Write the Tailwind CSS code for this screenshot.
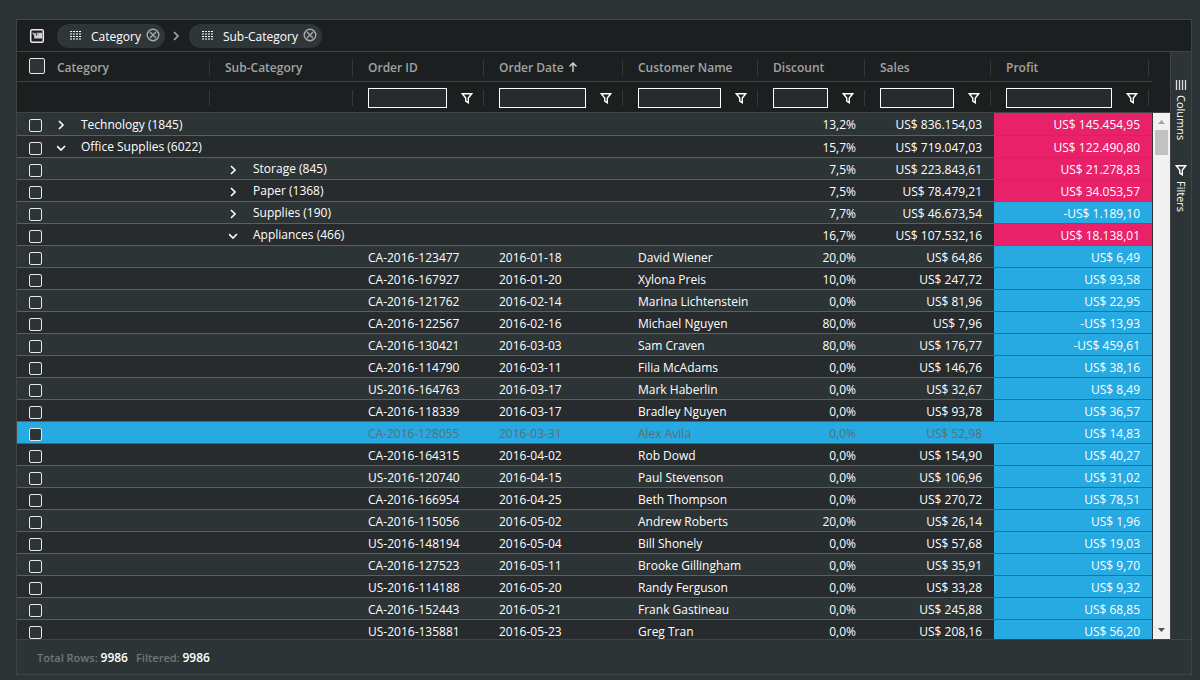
<!DOCTYPE html>
<html lang="en">
<head>
<meta charset="utf-8">
<title>Orders grid</title>
<script src="https://cdn.jsdelivr.net/npm/@tailwindcss/browser@4"></script>
</head>
<body class="h-screen overflow-hidden bg-[#2d3436] p-4 pt-[19px] pr-2 pb-[5px] text-xs text-white font-['Segoe_UI','Open_Sans','Noto_Sans',sans-serif]">
<svg class="hidden" aria-hidden="true">
  <symbol id="filter" viewBox="0 0 12 12"><path d="M1.300 1.700h9.400L7.300 6v4.700L4.700 9V6z" fill="none" stroke="currentColor" stroke-width="1.4"/></symbol>
  <symbol id="right" viewBox="0 0 10 10"><path d="M2 1l4 4-4 4" fill="none" stroke="currentColor" stroke-width="1.6"/></symbol>
  <symbol id="down" viewBox="0 0 10 10"><path d="M0 3l4 4 4-4" fill="none" stroke="currentColor" stroke-width="1.6"/></symbol>
  <symbol id="grip" viewBox="0 0 12 9"><path d="M1 .5h2m1 0h2m1 0h2m1 0h2M1 3h2m1 0h2m1 0h2m1 0h2M1 5.5h2m1 0h2m1 0h2m1 0h2M1 8h2m1 0h2m1 0h2m1 0h2" fill="none" stroke="currentColor" stroke-width="1.2"/></symbol>
  <symbol id="close" viewBox="0 0 14 14"><g fill="none" stroke="currentColor" stroke-width="1.4"><circle cx="7" cy="7" r="5.8"/><path d="M4 4l6 6M10 4l-6 6"/></g></symbol>
</svg>
<main class="flex h-full flex-col border border-[#434343]">
  <nav class="flex h-8 shrink-0 items-center border-b border-[#434343] bg-[#1c1f20] pl-3" aria-label="Row groups">
    <svg class="size-4" viewBox="0 0 16 16"><rect x="1.700" y="1.700" width="12.600" height="12.600" rx="1.500" fill="none" stroke="#f0e8f4" stroke-width="1.500"/><path d="M3 4.800h2.200l.8 1.400.8-1.400H13.200v5.700H5.200V7.500z" fill="#d6cfda"/><path d="M7.500 5v3M9 5.500v1" stroke="#1c1f20" stroke-width=".7"/></svg>
    <div class="ml-3 flex h-6 items-center rounded-full bg-[#2f363a] pl-3 pr-[5px]">
      <svg class="h-[9px] w-3"><use href="#grip"/></svg><span class="ml-[10px] pt-[2px]">Category</span>
      <button class="ml-[5px] pb-[2px] text-[#aaa]" aria-label="Remove Category"><svg class="size-[14px]"><use href="#close"/></svg></button>
    </div>
    <svg class="mx-[7px] size-[10px] text-[#aaa]"><use href="#right"/></svg>
    <div class="flex h-6 items-center rounded-full bg-[#2f363a] pl-3 pr-[5px]">
      <svg class="h-[9px] w-3"><use href="#grip"/></svg><span class="ml-[10px] pt-[2px]">Sub-Category</span>
      <button class="ml-[5px] pb-[2px] text-[#aaa]" aria-label="Remove Sub-Category"><svg class="size-[14px]"><use href="#close"/></svg></button>
    </div>
  </nav>
  <div class="flex min-h-0 flex-1">
    <div class="min-w-0 flex-1 overflow-hidden">
      <table class="w-full table-fixed border-separate border-spacing-0">
        <colgroup><col class="w-[28px]"><col class="w-[168px]"><col class="w-[143px]"><col class="w-[131px]"><col class="w-[139px]"><col class="w-[135px]"><col class="w-[107px]"><col class="w-[126px]"><col></colgroup>
        <thead class="bg-[#1c1f20] text-left text-[#a3a3a3]"><tr id="titles"></tr><tr id="filters"></tr></thead>
        <tbody id="rows"></tbody>
      </table>
    </div>
    <div class="flex w-[18px] shrink-0 flex-col">
      <div class="h-[61px] shrink-0 border-b border-[#434343] bg-[#1c1f20]"></div>
      <div class="ml-px flex flex-1 flex-col items-center justify-between bg-[#f1f1f1] py-[7px]">
        <div class="flex flex-col items-center gap-[6px]">
          <svg class="h-1 w-[7px]" viewBox="0 0 7 4"><path d="M0 4l3.500-4L7 4z" fill="#a3a3a3"/></svg>
          <div class="h-[25px] w-[13px] bg-[#c1c1c1]"></div>
        </div>
        <svg class="h-1 w-[7px]" viewBox="0 0 7 4"><path d="M0 0l3.500 4L7 0z" fill="#505050"/></svg>
      </div>
    </div>
    <aside class="flex w-[21px] shrink-0 flex-col items-center border-l border-[#434343] pt-7 text-[11px]">
      <button class="flex items-center gap-[5px] [writing-mode:vertical-rl]"><svg class="h-[10px] w-3" viewBox="0 0 12 10"><path d="M1.500 0v10M4.500 0v10M7.500 0v10M10.500 0v10" stroke="#ddd" stroke-width="1.300"/></svg>Columns</button>
      <button class="mt-6 flex items-center gap-[5px] [writing-mode:vertical-rl]"><svg class="size-3"><use href="#filter"/></svg>Filters</button>
    </aside>
  </div>
  <footer class="flex h-[35px] shrink-0 items-center border-t border-[#434343] pl-5 pt-[2px] text-[11px] font-semibold text-[#72787a]">
    <span>Total Rows: <b class="text-xs font-semibold text-white">9986</b></span><span class="ml-2">Filtered: <b class="text-xs font-semibold text-white">9986</b></span>
  </footer>
</main>
<script>
const box = (label, size) => `<input type="checkbox" aria-label="${label}" class="block appearance-none border-[#e8e8e8] bg-[#2d3436] ${size}">`;
const sep = '<span class="absolute right-[3px] top-2 h-4 w-px bg-[#343839]"></span>';
const names = ['Category','Sub-Category','Order ID','Order Date','Customer Name','Discount','Sales','Profit'];
const arrow = '<svg class="ml-1 inline size-[10px] align-baseline" viewBox="0 0 10 10"><path d="M5 10V1M1.500 4.500L5 1l3.500 3.500" fill="none" stroke="#ccc" stroke-width="1.500"/></svg>';
document.getElementById('titles').innerHTML =
  `<th class="h-[30px] border-b border-[#434343] p-0 pl-3 align-top"><div class="pt-[6px]">${box('Select all','size-4 rounded-[2px] border')}</div></th>` +
  names.map(n => `<th class="relative h-[30px] whitespace-nowrap border-b border-[#434343] px-3 pt-[3px] pb-0 font-semibold">${n}${n === 'Order Date' ? arrow : ''}${sep}</th>`).join('');
document.getElementById('filters').innerHTML =
  '<td class="h-[31px] border-b border-[#434343] p-0"></td>' +
  names.map((n, i) => `<td class="relative h-[31px] border-b border-[#434343] px-3 pt-[2px] pb-0">${i > 1 ? `<div class="flex items-center gap-[14px] pr-[2px]"><input aria-label="Filter ${n}" class="h-5 w-0 min-w-0 flex-1 border border-white bg-[#272b2e] px-1"><button aria-label="${n} filter menu" class="text-white"><svg class="size-3"><use href="#filter"/></svg></button></div>` : ''}${sep}</td>`).join('');
const data = [
 ['g','Technology (1845)',0,'13,2%','836.154,03','145.454,95'],
 ['g','Office Supplies (6022)',1,'15,7%','719.047,03','122.490,80'],
 ['s','Storage (845)',0,'7,5%','223.843,61','21.278,83'],
 ['s','Paper (1368)',0,'7,5%','78.479,21','34.053,57'],
 ['s','Supplies (190)',0,'7,7%','46.673,54','-1.189,10'],
 ['s','Appliances (466)',1,'16,7%','107.532,16','18.138,01'],
 ['CA-2016-123477','2016-01-18','David Wiener','20,0%','64,86','6,49'],
 ['CA-2016-167927','2016-01-20','Xylona Preis','10,0%','247,72','93,58'],
 ['CA-2016-121762','2016-02-14','Marina Lichtenstein','0,0%','81,96','22,95'],
 ['CA-2016-122567','2016-02-16','Michael Nguyen','80,0%','7,96','-13,93'],
 ['CA-2016-130421','2016-03-03','Sam Craven','80,0%','176,77','-459,61'],
 ['CA-2016-114790','2016-03-11','Filia McAdams','0,0%','146,76','38,16'],
 ['US-2016-164763','2016-03-17','Mark Haberlin','0,0%','32,67','8,49'],
 ['CA-2016-118339','2016-03-17','Bradley Nguyen','0,0%','93,78','36,57'],
 ['CA-2016-128055','2016-03-31','Alex Avila','0,0%','52,98','14,83'],
 ['CA-2016-164315','2016-04-02','Rob Dowd','0,0%','154,90','40,27'],
 ['US-2016-120740','2016-04-15','Paul Stevenson','0,0%','106,96','31,02'],
 ['CA-2016-166954','2016-04-25','Beth Thompson','0,0%','270,72','78,51'],
 ['CA-2016-115056','2016-05-02','Andrew Roberts','20,0%','26,14','1,96'],
 ['US-2016-148194','2016-05-04','Bill Shonely','0,0%','57,68','19,03'],
 ['CA-2016-127523','2016-05-11','Brooke Gillingham','0,0%','35,91','9,70'],
 ['US-2016-114188','2016-05-20','Randy Ferguson','0,0%','33,28','9,32'],
 ['CA-2016-152443','2016-05-21','Frank Gastineau','0,0%','245,88','68,85'],
 ['US-2016-135881','2016-05-23','Greg Tran','0,0%','208,16','56,20']];
const money = v => v[0] === '-' ? '-US$ ' + v.slice(1) : 'US$ ' + v;
const td = (content, extra = '') => `<td class="border-b border-[#5b5f60] px-3 pt-[2px] pb-0 ${extra}">${content}</td>`;
document.getElementById('rows').innerHTML = data.map((r, i) => {
  const group = r[0].length === 1, hot = i === 14;
  const label = group ? `<div class="flex items-center ${r[0] === 's' ? 'pl-1' : ''}"><button aria-label="Toggle ${r[1]}"><svg class="mr-[14px] block size-[10px] overflow-visible"><use href="${r[2] ? '#down' : '#right'}"/></svg></button><span class="-mt-px">${r[1]}</span></div>` : '';
  const pink = [0, 1, 2, 3, 5].includes(i);
  const bg = hot ? 'bg-[#27a9e1] text-[#5d6e77]' : i % 2 ? 'bg-[#272b2e]' : 'bg-[#2d3436]';
  return `<tr class="${i ? 'h-[22px]' : 'h-[23px]'} whitespace-nowrap leading-4 ${bg}">` +
    `<td class="border-b border-[#5b5f60] p-0 pl-3 pt-[3px]">${box('Select row ' + (i + 1), 'size-[13px] rounded-[2px] border')}</td>` +
    td(r[0] === 'g' ? label : '') + td(r[0] === 's' ? label : '') +
    td(group ? '' : r[0]) + td(group ? '' : r[1]) + td(group ? '' : r[2]) +
    td(r[3], 'text-right') + td(money(r[4]), 'text-right') +
    td(money(r[5]), 'text-right text-white ' + (pink ? 'bg-[#e82168]' : 'bg-[#27a9e1]')) + '</tr>';
}).join('');
</script>
</body>
</html>
